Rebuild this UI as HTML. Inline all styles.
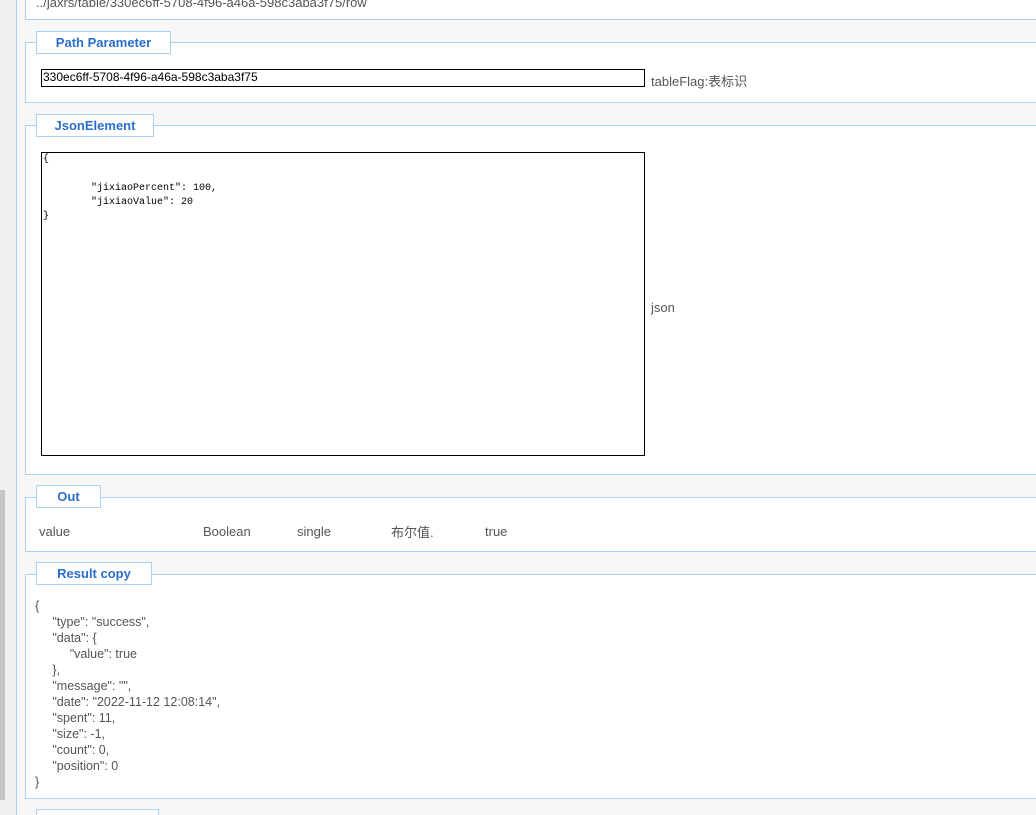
<!DOCTYPE html>
<html style="overflow:hidden;width:1036px;height:815px"><head><meta charset="utf-8"><style>
*{margin:0;padding:0;box-sizing:border-box}
body{width:1036px;height:815px;overflow:hidden;background:#f7f7f7;position:relative;font-family:"Liberation Sans","Noto Sans CJK SC",sans-serif;font-size:13px;color:#555}
.a{position:absolute}
.panel{position:absolute;left:25px;right:-5px;background:#fff;border:1px solid #a9d1f3}
.leg{position:absolute;left:36px;height:23px;background:#fff;border:1px solid #a9d1f3;color:#2a6fc9;font-weight:bold;font-size:13px;text-align:center;line-height:21px}
pre{font-family:"Liberation Mono",monospace}
</style></head><body>
<div class="a" style="left:0;top:0;width:16px;height:815px;background:#f0f0f0"></div>
<div class="a" style="left:0;top:490px;width:5px;height:310px;background:#c4c4c4"></div>
<div class="a" style="left:16px;top:0;width:1px;height:815px;background:#a9d1f3"></div>

<div class="panel" style="top:-5px;height:25px"></div>
<div class="a" style="left:36px;top:-5px;font-size:13px">../jaxrs/table/330ec6ff-5708-4f96-a46a-598c3aba3f75/row</div>

<div class="panel" style="top:42px;height:61px"></div>
<div class="leg" style="top:31px;width:135px">Path Parameter</div>
<div class="a" style="left:41px;top:69px;width:604px;height:18px;border:1px solid #000;background:#fff;color:#000;font-size:12px;padding-left:1px;line-height:15px">330ec6ff-5708-4f96-a46a-598c3aba3f75</div>
<div class="a" style="left:651px;top:71px">tableFlag:表标识</div>

<div class="panel" style="top:125px;height:350px"></div>
<div class="leg" style="top:114px;width:118px">JsonElement</div>
<div class="a" style="left:41px;top:152px;width:604px;height:304px;border:1px solid #000;background:#fff"></div>
<pre class="a" style="left:43px;top:153px;color:#000;font-size:10px;line-height:14.3px">{

        "jixiaoPercent": 100,
        "jixiaoValue": 20
}</pre>
<div class="a" style="left:651px;top:300px">json</div>

<div class="panel" style="top:497px;height:55px"></div>
<div class="leg" style="top:485px;width:65px">Out</div>
<div class="a" style="left:39px;top:524px">value</div>
<div class="a" style="left:203px;top:524px">Boolean</div>
<div class="a" style="left:297px;top:524px">single</div>
<div class="a" style="left:391px;top:522px">布尔值.</div>
<div class="a" style="left:485px;top:524px">true</div>

<div class="panel" style="top:574px;height:225px"></div>
<div class="leg" style="top:562px;width:116px">Result copy</div>
<div class="a" style="left:35px;top:598px;line-height:16px;font-size:12.5px;white-space:pre">{
     "type": "success",
     "data": {
          "value": true
     },
     "message": "",
     "date": "2022-11-12 12:08:14",
     "spent": 11,
     "size": -1,
     "count": 0,
     "position": 0
}</div>

<div class="leg" style="top:809px;width:123px"></div>
</body></html>
